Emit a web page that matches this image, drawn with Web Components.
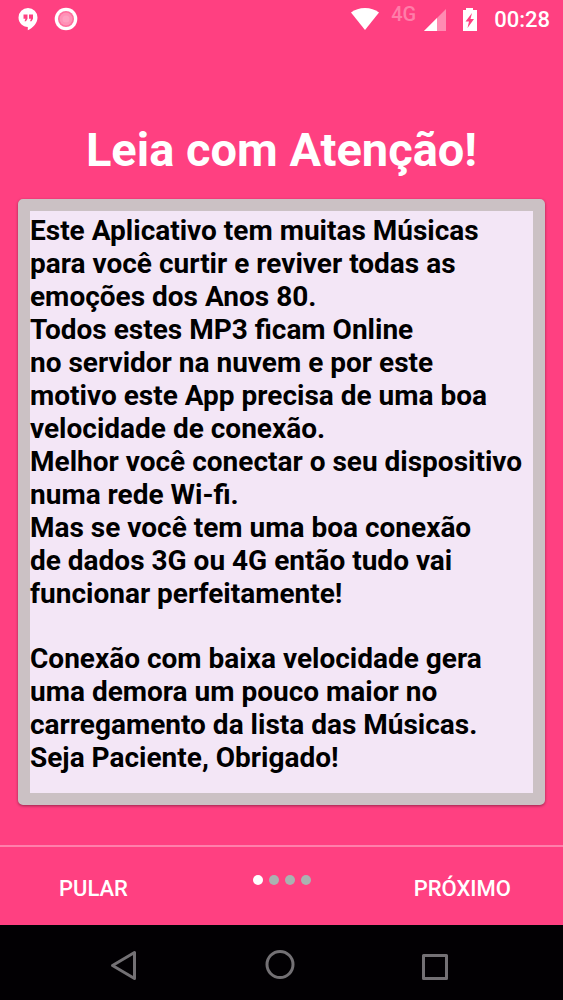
<!DOCTYPE html>
<html lang="pt-BR">
<head>
<meta charset="utf-8">
<meta name="viewport" content="width=device-width, initial-scale=1">
<title>Leia com Atenção!</title>
<style>
  body {
    margin: 0;
    background: #ff4081;
    color: #fff;
    font-family: Roboto, "Liberation Sans", sans-serif;
  }
</style>
</head>
<body>
<intro-screen>
  <status-bar slot="status" data-network="4G" data-time="00:28"></status-bar>
  <intro-slide data-title="Leia com Atenção!">
    <p>Este Aplicativo tem muitas Músicas<br>
      para você curtir e reviver todas as<br>
      emoções dos Anos 80.<br>
      Todos estes MP3 ficam Online<br>
      no servidor na nuvem e por este<br>
      motivo este App precisa de uma boa<br>
      velocidade de conexão.<br>
      Melhor você conectar o seu dispositivo<br>
      numa rede Wi-fi.<br>
      Mas se você tem uma boa conexão<br>
      de dados 3G ou 4G então tudo vai<br>
      funcionar perfeitamente!</p>
    <p>Conexão com baixa velocidade gera<br>
      uma demora um pouco maior no<br>
      carregamento da lista das Músicas.<br>
      Seja Paciente, Obrigado!</p>
  </intro-slide>
  <pager-bar slot="pager" data-skip="PULAR" data-next="PRÓXIMO" data-pages="4"></pager-bar>
  <system-nav slot="nav"></system-nav>
</intro-screen>

<script>
class IntroScreen extends HTMLElement {
  constructor() {
    super();
    this.attachShadow({ mode: "open" });
    this.shadowRoot.innerHTML = `
      <style>
        :host {
          display: flex;
          flex-direction: column;
          min-height: 100vh;
        }
        main {
          display: flex;
          flex-direction: column;
          flex: 1;
        }
      </style>
      <slot name="status"></slot>
      <main><slot></slot></main>
      <slot name="pager"></slot>
      <slot name="nav"></slot>`;
  }
}

class StatusBar extends HTMLElement {
  constructor() {
    super();
    this.attachShadow({ mode: "open" });
    this.shadowRoot.innerHTML = `
      <style>
        :host {
          display: flex;
          justify-content: space-between;
          align-items: center;
          height: 40px;
          padding: 0 13px 0 16px;
        }
        div {
          display: flex;
          align-items: center;
        }
        .notifications {
          gap: 14px;
          padding-bottom: 2px;
        }
        svg {
          display: block;
          fill: #fff;
        }
        .wifi { margin-bottom: 2px; }
        .network {
          align-self: flex-start;
          margin: 4px 8px 0 12px;
          font-size: 20px;
          line-height: 20px;
          font-weight: 500;
          color: #ff7da9;
        }
        .battery { margin: 0 15px; }
        time {
          font-size: 22px;
          line-height: 40px;
          font-weight: 500;
        }
      </style>
      <div class="notifications">
        <svg width="24" height="24" viewBox="0 0 24 24" aria-hidden="true">
          <path d="M12 1a9.500 9.500 0 0 0-9.500 9.500c0 5.200 4.200 9.400 9.300 9.500v3.200c5.500-2.600 9.700-7.300 9.700-12.700A9.500 9.500 0 0 0 12 1z"/>
          <path d="M7.500 7.500h4v4.200l-1.500 2.500H8.500l1-2.500h-2zM13 7.500h4v4.200l-1.500 2.500H14l1-2.500h-2z" fill="#ff4081"/>
        </svg>
        <svg width="24" height="24" viewBox="0 0 24 24" aria-hidden="true">
          <circle cx="12" cy="12" r="11.300"/>
          <circle cx="12" cy="12" r="8" fill="#ff6d9d"/>
          <circle cx="12" cy="12" r="6.500" fill="#ff91b6"/>
          <circle cx="12" cy="12" r="3.500" fill="#ff9fc0"/>
        </svg>
      </div>
      <div>
        <svg class="wifi" width="28" height="24" viewBox="0 0 28 24" aria-hidden="true">
          <path d="M14 23L0 5.500C4 2.500 8.500 1 14 1s10 1.500 14 4.500z"/>
        </svg>
        <span class="network"></span>
        <svg width="22" height="22" viewBox="0 0 22 22" aria-hidden="true">
          <path d="M0 22L22 0v22z" fill="#ff8bb2"/>
          <path d="M0 22L13 9v13z"/>
        </svg>
        <svg class="battery" width="18" height="24" viewBox="0 0 18 24" aria-hidden="true">
          <path d="M5 0h7v2h4v21H2V2h3z"/>
          <path d="M11 5L4.500 13.500h3.500L6.500 20l6.500-9H9.500z" fill="#ff4081"/>
        </svg>
        <time></time>
      </div>`;
  }

  connectedCallback() {
    this.shadowRoot.querySelector(".network").textContent = this.dataset.network;
    this.shadowRoot.querySelector("time").textContent = this.dataset.time;
  }
}

class IntroSlide extends HTMLElement {
  constructor() {
    super();
    this.attachShadow({ mode: "open" });
    this.shadowRoot.innerHTML = `
      <style>
        :host {
          display: flex;
          flex-direction: column;
          flex: 1;
          padding: 82px 18px 40px;
        }
        h1 {
          margin: 0 0 21px;
          font-size: 47px;
          line-height: 56px;
          font-weight: 700;
          text-align: center;
        }
        article {
          flex: 1;
          padding: 3px 0 16px;
          border: 12px solid #cbc1c4;
          border-radius: 5px;
          background: #f3e6f6;
          box-shadow: 0 1px 3px rgba(0, 0, 0, 0.4);
          color: #000;
          font-size: 28px;
          line-height: 33px;
          font-weight: 700;
        }
        ::slotted(p) { margin: 0 0 32px; }
        ::slotted(p:last-child) { margin: 0; }
      </style>
      <h1></h1>
      <article><slot></slot></article>`;
  }

  connectedCallback() {
    this.shadowRoot.querySelector("h1").textContent = this.dataset.title;
  }
}

class PagerBar extends HTMLElement {
  constructor() {
    super();
    this.attachShadow({ mode: "open" });
    this.shadowRoot.innerHTML = `
      <style>
        :host {
          display: grid;
          grid-template-columns: 1fr auto 1fr;
          height: 78px;
          border-top: 2px solid #ff80ab;
        }
        button {
          padding: 6px 52px 0 59px;
          border: 0;
          background: none;
          color: inherit;
          font: 500 22px/26px Roboto, "Liberation Sans", sans-serif;
          cursor: pointer;
        }
        .skip { justify-self: start; }
        .next { justify-self: end; }
        .dots {
          display: flex;
          gap: 6px;
          padding-top: 28px;
        }
        .dots span {
          width: 10px;
          height: 10px;
          border-radius: 50%;
          background: #aab2b1;
        }
        .dots span:first-child { background: #fff; }
      </style>
      <button class="skip" type="button"></button>
      <div class="dots"></div>
      <button class="next" type="button"></button>`;
  }

  connectedCallback() {
    this.shadowRoot.querySelector(".skip").textContent = this.dataset.skip;
    this.shadowRoot.querySelector(".next").textContent = this.dataset.next;
    const dots = this.shadowRoot.querySelector(".dots");
    dots.replaceChildren();
    for (let i = 0; i < Number(this.dataset.pages); i++) {
      dots.append(document.createElement("span"));
    }
  }
}

class SystemNav extends HTMLElement {
  constructor() {
    super();
    this.attachShadow({ mode: "open" });
    this.shadowRoot.innerHTML = `
      <style>
        :host {
          display: flex;
          justify-content: space-between;
          align-items: center;
          height: 75px;
          padding: 0 112px 0 108px;
          background: #020003;
        }
        button {
          padding: 4px 0 0;
          border: 0;
          background: none;
          cursor: pointer;
        }
        svg {
          display: block;
          fill: none;
          stroke: #737074;
          stroke-width: 3;
          stroke-linejoin: round;
        }
      </style>
      <button type="button" aria-label="Voltar">
        <svg width="32" height="32" viewBox="0 0 32 32"><path d="M26.500 3.500v26L4.500 16.500z"/></svg>
      </button>
      <button type="button" aria-label="Início">
        <svg width="32" height="32" viewBox="0 0 32 32"><circle cx="16" cy="15.500" r="13"/></svg>
      </button>
      <button type="button" aria-label="Recentes">
        <svg width="32" height="32" viewBox="0 0 32 32"><path d="M4.500 6.500h23v23h-23z"/></svg>
      </button>`;
  }
}

customElements.define("intro-screen", IntroScreen);
customElements.define("status-bar", StatusBar);
customElements.define("intro-slide", IntroSlide);
customElements.define("pager-bar", PagerBar);
customElements.define("system-nav", SystemNav);
</script>
</body>
</html>
